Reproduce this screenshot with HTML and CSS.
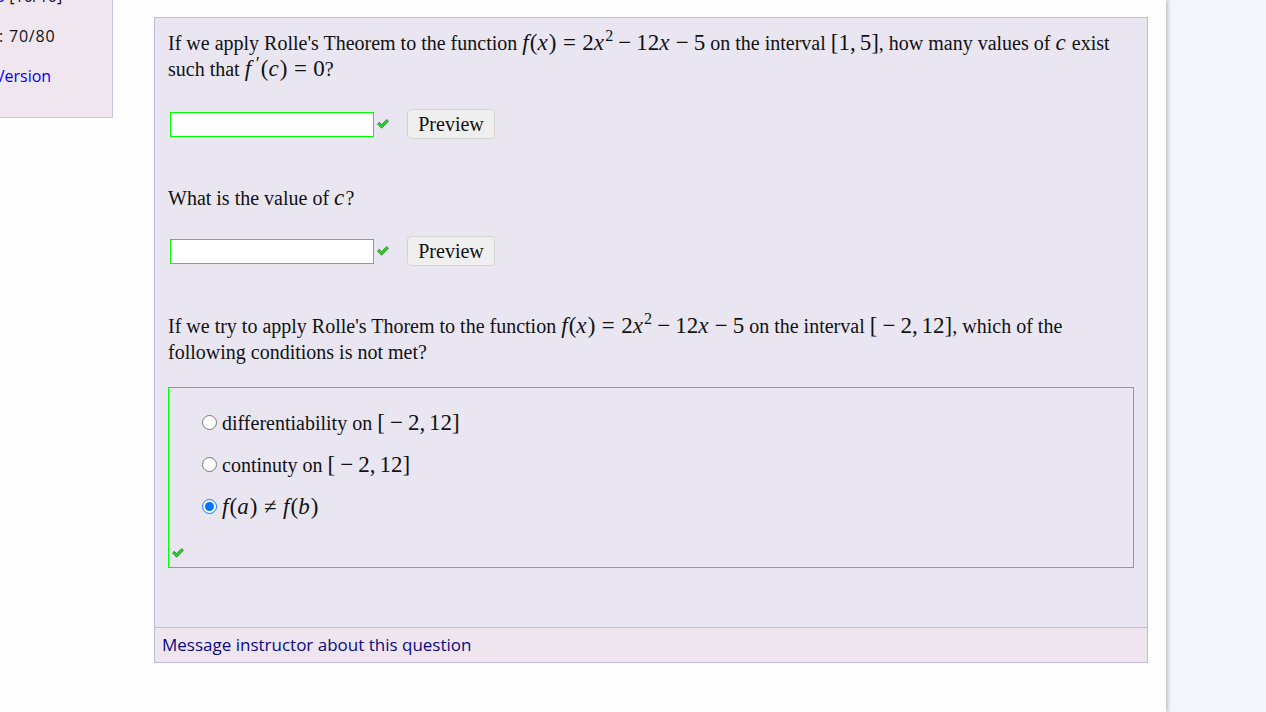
FILE: index.html
```html
<!DOCTYPE html>
<html>
<head>
<meta charset="utf-8">
<link rel="stylesheet" href="styles.css">
</head>
<body>
<div class="page">
  <aside class="sidebar">
    <div class="sline first"><a class="lnk">0</a> [10/10]</div>
    <div class="sline second">: 70/80</div>
    <div class="sline third"><a class="lnk">Version</a></div>
  </aside>
  <main class="qbox">
    <div class="qbody">
      <p class="qtext">If we apply Rolle's Theorem to the function <span class="m"><i>f</i>(<i>x</i>)<span class="rel">=</span>2<i>x</i><sup>2</sup><span class="bin">−</span>12<i>x</i><span class="bin">−</span>5</span> on the interval <span class="m">[1,<span class="sp"></span>5]</span>, how many values of <span class="m"><i>c</i></span> exist such that <span class="m"><i>f</i><span class="prime">′</span>(<i>c</i>)<span class="rel">=</span>0</span>?</p>
      <div class="answer">
        <input class="ans" type="text">
        <svg class="check" width="12" height="10" viewBox="0 0 12 10"><polygon points="0.5,5 2.3,3.3 4.6,5.6 9.8,0.5 11.5,2.2 4.6,9.2" fill="#33cc33" stroke="#138a13" stroke-width="0.8" stroke-linejoin="round"/></svg>
        <button class="preview">Preview</button>
      </div>
      <p class="qtext gap2">What is the value of <span class="m"><i>c</i></span>?</p>
      <div class="answer a2">
        <input class="ans" type="text">
        <svg class="check" width="12" height="10" viewBox="0 0 12 10"><polygon points="0.5,5 2.3,3.3 4.6,5.6 9.8,0.5 11.5,2.2 4.6,9.2" fill="#33cc33" stroke="#138a13" stroke-width="0.8" stroke-linejoin="round"/></svg>
        <button class="preview">Preview</button>
      </div>
      <p class="qtext gap3">If we try to apply Rolle's Thorem to the function <span class="m"><i>f</i>(<i>x</i>)<span class="rel">=</span>2<i>x</i><sup>2</sup><span class="bin">−</span>12<i>x</i><span class="bin">−</span>5</span> on the interval <span class="m">[<span class="bin">−</span>2,<span class="sp"></span>12]</span>, which of the following conditions is not met?</p>
      <fieldset class="choices">
        <label class="opt"><input type="radio" name="c1"><span class="otext">differentiability on <span class="m">[<span class="bin">−</span>2,<span class="sp"></span>12]</span></span></label>
        <label class="opt"><input type="radio" name="c1"><span class="otext">continuty on <span class="m">[<span class="bin">−</span>2,<span class="sp"></span>12]</span></span></label>
        <label class="opt"><input type="radio" name="c1" checked><span class="otext"><span class="m"><i>f</i>(<i>a</i>)<span class="rel">≠</span><i>f</i>(<i>b</i>)</span></span></label>
        <svg class="check fcheck" width="12" height="10" viewBox="0 0 12 10"><polygon points="0.5,5 2.3,3.3 4.6,5.6 9.8,0.5 11.5,2.2 4.6,9.2" fill="#33cc33" stroke="#138a13" stroke-width="0.8" stroke-linejoin="round"/></svg>
      </fieldset>
    </div>
    <div class="qfoot"><a class="msg">Message instructor about this question</a></div>
  </main>
</div>
<div class="rightpane"></div>
</body>
</html>
```
FILE: styles.css
```css
html, body {
  margin: 0;
  padding: 0;
}
body {
  display: flex;
  height: 712px;
  overflow: hidden;
  background: #f4f5fd;
  font-family: "Open Sans", "Lato", sans-serif;
}
.page {
  width: 1166px;
  flex: none;
  background: #fdfdfd;
  display: flex;
  align-items: flex-start;
  box-shadow: 2px 0 4px rgba(0, 0, 0, 0.22);
  z-index: 1;
}
.rightpane {
  flex: 1;
}
.sidebar {
  box-sizing: border-box;
  width: 113px;
  height: 138px;
  margin-top: -20px;
  background: #f0e6ef;
  border-right: 1px solid #c4c4e2;
  border-bottom: 1px solid #c4c4e2;
  padding-top: 6px;
  font-size: 16px;
  color: #111;
}
.sline {
  line-height: 20px;
  height: 20px;
  white-space: nowrap;
}
.sline.first { margin-left: -4px; }
.sline.second { margin-top: 20px; margin-left: -1px; letter-spacing: 0.8px; }
.sline.third { margin-top: 20px; margin-left: -5px; }
.lnk {
  color: #0000ee;
}
.qbox {
  box-sizing: border-box;
  width: 994px;
  margin-left: 41px;
  margin-top: 17px;
  background: #e9e6f1;
  border: 1px solid #bcbcdc;
}
.qbody {
  padding: 12px 13px 59px 13px;
  font-family: "Liberation Serif", "Times New Roman", serif;
  font-size: 20px;
  color: #111;
}
.qtext {
  margin: 0;
  line-height: 26px;
}
.m {
  font-size: 1.15em;
  line-height: 20px;
  white-space: nowrap;
}
.m i {
  font-style: italic;
  padding-right: 0.05em;
}
.m sup {
  font-size: 0.7em;
  vertical-align: 0;
  position: relative;
  top: -0.55em;
  line-height: 0;
}
.rel {
  margin: 0 0.28em;
}
.bin {
  margin: 0 0.22em;
}
.sp {
  display: inline-block;
  width: 0.17em;
}
.prime {
  font-size: 0.8em;
  vertical-align: 0.3em;
  line-height: 0;
  margin: 0 0.05em 0 0.2em;
}
.answer {
  display: flex;
  align-items: center;
  height: 30px;
  margin-top: 27px;
}
.answer.a2 {
  margin-top: 25px;
}
.gap2 {
  margin-top: 46px;
}
.gap3 {
  margin-top: 47px;
}
.ans {
  box-sizing: border-box;
  width: 204px;
  height: 25px;
  margin: 0 0 0 2px;
  border: 1px solid #00ff00;
  background: #fff;
  outline: none;
  padding: 0 4px;
}
.check {
  display: block;
  margin-left: 3px;
}
.preview {
  box-sizing: border-box;
  height: 30px;
  width: 88px;
  margin-left: 18px;
  padding: 0;
  background: #efefef;
  border: 1px solid #d4d4d4;
  border-radius: 4px;
  font-family: "Liberation Serif", "Times New Roman", serif;
  font-size: 20px;
  color: #111;
}
.choices {
  margin: 22px 0 0 0;
  padding: 14px 0 9px 0;
  border: 1px solid #00ff00;
  min-inline-size: 0;
}
.opt {
  display: flex;
  align-items: center;
  height: 42px;
  padding-left: 33px;
  white-space: nowrap;
}
.opt input {
  width: 15px;
  height: 15px;
  margin: 0 5px 0 0;
  position: relative;
  top: -1px;
}
.otext {
  line-height: 26px;
}
.fcheck {
  margin-top: 20px;
  margin-left: 3px;
}
.qfoot {
  box-sizing: border-box;
  height: 35px;
  border-top: 1px solid #bcbcdc;
  background: #efe5ef;
  padding-left: 7px;
  line-height: 34px;
  font-size: 17px;
}
.msg {
  color: #0a0a80;
}
```
